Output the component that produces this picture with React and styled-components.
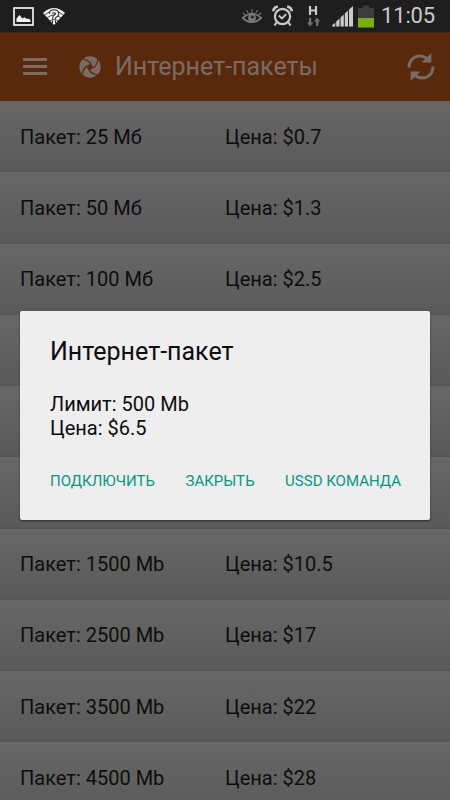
import React from "react";
import styled, { createGlobalStyle } from "styled-components";

const COLORS = {
  statusBar: "#1e1e1e",
  header: "#5a290b",
  headerText: "#796c66",
  rowText: "#0d0d0d",
  dialog: "#eeeeee",
  accent: "#0b9585",
};

const GlobalStyle = createGlobalStyle`
  * {
    box-sizing: border-box;
  }
  body {
    margin: 0;
    overflow: hidden;
    background: #5c5c5c;
    font-family: Roboto, "Noto Sans", sans-serif;
  }
`;

const Screen = styled.div`
  position: relative;
  width: 450px;
  height: 800px;
  overflow: hidden;
`;

const StatusBar = styled.div`
  display: flex;
  align-items: center;
  height: 32px;
  padding: 0 14px 0 13px;
  background: ${COLORS.statusBar};
`;

const StatusIcon = styled.svg`
  display: block;
  flex: none;
  margin-left: ${(props) => props.$gap || 0}px;
`;

const Spacer = styled.div`
  flex: 1;
`;

const Clock = styled.div`
  width: 55px;
  margin-left: 7px;
  color: #cbcbcb;
  font-size: 22px;
  line-height: 32px;
  letter-spacing: -0.15px;
  white-space: nowrap;
`;

const Header = styled.header`
  display: flex;
  align-items: center;
  height: 69px;
  padding: 0 15px 0 23px;
  background: ${COLORS.header};
  color: ${COLORS.headerText};
  box-shadow: inset 0 1px 0 #40200e;
`;

const HeaderTitle = styled.h1`
  flex: 1;
  margin: 1px 0 0 14px;
  font-size: 25px;
  font-weight: 400;
  line-height: 30px;
  white-space: nowrap;
`;

const HeaderIcon = styled.svg`
  display: block;
  flex: none;
  margin-left: ${(props) => props.$gap || 0}px;
`;

const PackageRow = styled.div`
  display: grid;
  grid-template-columns: 205px 1fr;
  align-items: center;
  height: 71.25px;
  padding-left: 20px;
  background: linear-gradient(#676767, #5a5a5a 96%, #555555);
  color: ${COLORS.rowText};
  font-size: 20px;
  line-height: 24px;
`;

const RowText = styled.div`
  white-space: nowrap;
`;

const Dialog = styled.div`
  position: absolute;
  top: 311px;
  left: 20px;
  width: 410px;
  height: 209px;
  padding: 26px 29px 0 30px;
  border-radius: 2px;
  background: ${COLORS.dialog};
  color: #0c0c0c;
  box-shadow: 0 1px 2px rgba(0, 0, 0, 0.55);
`;

const DialogTitle = styled.h2`
  margin: 0 0 25px;
  font-size: 25px;
  font-weight: 400;
  line-height: 30px;
`;

const DialogText = styled.div`
  font-size: 20px;
  line-height: 24px;
`;

const DialogActions = styled.div`
  display: flex;
  justify-content: space-between;
  margin-top: 31px;
`;

const DialogButton = styled.button`
  padding: 0;
  border: none;
  background: none;
  color: ${COLORS.accent};
  font-family: inherit;
  font-size: 15px;
  line-height: 20px;
  white-space: nowrap;
`;

// rows without a name are covered by the dialog
const packages = [
  { id: 1, name: "25 Мб", price: "$0.7" },
  { id: 2, name: "50 Мб", price: "$1.3" },
  { id: 3, name: "100 Мб", price: "$2.5" },
  { id: 4 },
  { id: 5 },
  { id: 6 },
  { id: 7, name: "1500 Mb", price: "$10.5" },
  { id: 8, name: "2500 Mb", price: "$17" },
  { id: 9, name: "3500 Mb", price: "$22" },
  { id: 10, name: "4500 Mb", price: "$28" },
];

function PictureIcon() {
  return (
    <StatusIcon width="21" height="19" viewBox="0 0 21 19">
      <rect x="1" y="1" width="19" height="17" fill="none" stroke="#f2f2f2" strokeWidth="1.7" />
      <path d="M3.5 15V11.500l3-3.500 3 3.500 2-1.300 2.500 1.800 1.500-.6 2 1.600V15z" fill="#f2f2f2" />
    </StatusIcon>
  );
}

function WifiQuestionIcon() {
  return (
    <StatusIcon $gap={9} width="22" height="17" viewBox="0 0 22 17">
      <path d="M0 5Q11-5 22 5L11 17z" fill="#f2f2f2" />
      <path
        d="M1.500 7Q11-.8 20.500 7M4 10Q11 4 18 10M7 13Q11 9.500 15 13"
        fill="none"
        stroke={COLORS.statusBar}
        strokeWidth="0.8"
      />
      <path
        d="M7.800 5.800Q8 3.300 11 3.300T14.200 5.800Q14.200 7.300 12 8.300Q11 9 11 10.800M11 12.600v2.400"
        fill="none"
        stroke={COLORS.statusBar}
        strokeWidth="4"
      />
      <path
        d="M7.800 5.800Q8 3.300 11 3.300T14.200 5.800Q14.200 7.300 12 8.300Q11 9 11 10.800M11 12.600v3"
        fill="none"
        stroke="#f2f2f2"
        strokeWidth="2"
      />
    </StatusIcon>
  );
}

function EyeIcon() {
  return (
    <StatusIcon width="20" height="16" viewBox="0 0 20 16">
      <path d="M.7 10Q10 1.500 19.300 10Q10 18.300.7 10z" fill="none" stroke="#777" strokeWidth="1.700" />
      <circle cx="10" cy="10" r="3.900" fill="#777" />
      <circle cx="10.500" cy="9" r="1.500" fill={COLORS.statusBar} />
      <path d="M10 1v4M4.500 2l1.700 3M15.500 2l-1.700 3M1 5l2.200 2M19 5l-2.200 2" stroke="#777" strokeWidth="1.100" />
    </StatusIcon>
  );
}

function AlarmIcon() {
  return (
    <StatusIcon $gap={10} width="21" height="22" viewBox="0 0 21 22">
      <g fill="none" stroke="#c9c9c9">
        <circle cx="10.500" cy="11.500" r="7.600" strokeWidth="2.200" />
        <path d="M6.800 10.500l3.200 3 4.200-4.300" strokeWidth="1.900" />
        <path d="M1.300 6.200Q1.500 2.500 5.800 1.500M19.700 6.200Q19.500 2.500 15.200 1.500" strokeWidth="2.600" />
        <path d="M4.500 17.500l-2 3M16.500 17.500l2 3" strokeWidth="2.200" />
      </g>
    </StatusIcon>
  );
}

function DataIcon() {
  return (
    <StatusIcon $gap={14} width="14" height="23" viewBox="0 0 14 23">
      <path d="M3 1v9M9 1v9M3 5.500h6" stroke="#c9c9c9" strokeWidth="2.200" />
      <path d="M0 17.500h2v-4.500h2.200v4.500h2L3.100 21.500zM7 16.500l3.200-4 3.100 4h-2v4.500H9v-4.500z" fill="#707070" />
    </StatusIcon>
  );
}

function SignalIcon() {
  return (
    <StatusIcon $gap={11} width="22" height="22" viewBox="0 0 22 22">
      <path
        d="M0 21.500V20.500L3.300 17.500v4zM4.200 21.500v-5L7.500 13.500v8zM8.500 21.500v-9L11.800 9.500v12zM12.800 21.500V8.500L16 5.500v16zM17 21.500V4.500L21 1v20.500z"
        fill="#c9c9c9"
      />
    </StatusIcon>
  );
}

function BatteryIcon() {
  return (
    <StatusIcon $gap={4} width="16" height="23" viewBox="0 0 16 23">
      <path d="M0 3h5V.5h6V3h5v19.500H0z" fill="#3d3d3d" />
      <path d="M0 13h16v9.500H0z" fill="#7cae0e" />
    </StatusIcon>
  );
}

function MenuIcon() {
  return (
    <HeaderIcon width="24" height="18" viewBox="0 0 24 18">
      <path d="M0 1.500h24M0 8.500h24M0 15.500h24" stroke="currentColor" strokeWidth="2.800" />
    </HeaderIcon>
  );
}

function LogoIcon() {
  return (
    <HeaderIcon $gap={32} width="22" height="22" viewBox="0 0 22 22">
      <circle cx="11" cy="11" r="10.700" fill="currentColor" />
      <path d="M11.800 6.600Q12.500 10 15.400 11.800Q12 12.500 10.200 15.400Q9.500 12 6.600 10.200Q10 9.500 11.800 6.600z" fill={COLORS.header} />
      {[0, 90, 180, 270].map((angle) => (
        <path
          key={angle}
          d="M11.800 7.500Q8.500 3.600 3.500 3.200"
          transform={`rotate(${angle} 11 11)`}
          fill="none"
          stroke={COLORS.header}
          strokeWidth="1.300"
        />
      ))}
    </HeaderIcon>
  );
}

function RefreshIcon() {
  return (
    <HeaderIcon width="28" height="30" viewBox="0 0 28 30">
      {[0, 180].map((angle) => (
        <g key={angle} transform={`rotate(${angle} 14 15)`}>
          <path d="M2 15.500C2 5.500 12 .8 20 6.500" fill="none" stroke="currentColor" strokeWidth="3" />
          <path d="M24.400 1v9.500H14.500z" fill="currentColor" />
        </g>
      ))}
    </HeaderIcon>
  );
}

function App() {
  return (
    <Screen>
      <GlobalStyle />
      <StatusBar>
        <PictureIcon />
        <WifiQuestionIcon />
        <Spacer />
        <EyeIcon />
        <AlarmIcon />
        <DataIcon />
        <SignalIcon />
        <BatteryIcon />
        <Clock>11:05</Clock>
      </StatusBar>
      <Header>
        <MenuIcon />
        <LogoIcon />
        <HeaderTitle>Интернет-пакеты</HeaderTitle>
        <RefreshIcon />
      </Header>
      {packages.map((item) => (
        <PackageRow key={item.id}>
          {item.name && <RowText>Пакет: {item.name}</RowText>}
          {item.price && <RowText>Цена: {item.price}</RowText>}
        </PackageRow>
      ))}
      <Dialog role="dialog">
        <DialogTitle>Интернет-пакет</DialogTitle>
        <DialogText>Лимит: 500 Mb</DialogText>
        <DialogText>Цена: $6.5</DialogText>
        <DialogActions>
          <DialogButton>ПОДКЛЮЧИТЬ</DialogButton>
          <DialogButton>ЗАКРЫТЬ</DialogButton>
          <DialogButton>USSD КОМАНДА</DialogButton>
        </DialogActions>
      </Dialog>
    </Screen>
  );
}

export default App;
